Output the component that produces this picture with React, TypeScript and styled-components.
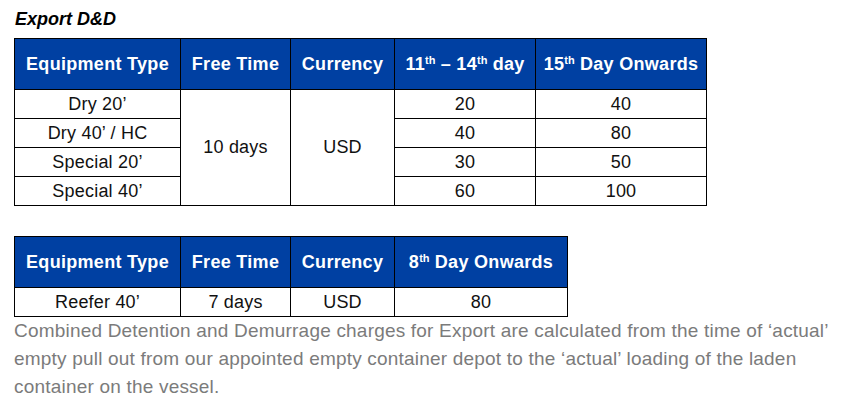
import styled, { createGlobalStyle } from "styled-components"

const GlobalStyle = createGlobalStyle`
    body {
        margin: 0;
        background: #ffffff;
        font-family: "Liberation Sans", Arial, sans-serif;
    }
`

const Page = styled.div`
    box-sizing: border-box;
    width: 843px;
    height: 404px;
    padding: 8px 0 0 14px;
    display: flex;
    flex-direction: column;
    align-items: flex-start;
`

const Title = styled.h3`
    margin: 0 0 7px 1px;
    font-size: 18px;
    line-height: 23px;
    font-weight: 700;
    font-style: italic;
    color: #000;
`

const Table = styled.table<{ w: number; gap?: number }>`
    width: ${props => props.w}px;
    border-collapse: collapse;
    table-layout: fixed;
    margin-bottom: ${props => props.gap ?? 0}px;
`

const HeadCell = styled.th<{ w: number }>`
    box-sizing: border-box;
    width: ${props => props.w}px;
    height: 51px;
    padding: 0;
    background: #0040a2;
    color: #fff;
    font-size: 18px;
    font-weight: 700;
    letter-spacing: 0.3px;
    white-space: nowrap;
    text-align: center;
    border: 1px solid #000;
    sup {
        font-size: 11px;
        vertical-align: 6px;
        line-height: 0;
        letter-spacing: 0;
    }
`

const Cell = styled.td`
    box-sizing: border-box;
    height: 29px;
    padding: 0;
    font-size: 18px;
    letter-spacing: 0.2px;
    color: #111;
    text-align: center;
    vertical-align: middle;
    border: 1px solid #000;
`

const Note = styled.p`
    margin: 0;
    width: 829px;
    font-size: 19px;
    line-height: 28px;
    letter-spacing: 0.2px;
    color: #7b7b7b;
`

const exportRows = [
    { type: "Dry 20’", a: "20", b: "40" },
    { type: "Dry 40’ / HC", a: "40", b: "80" },
    { type: "Special 20’", a: "30", b: "50" },
    { type: "Special 40’", a: "60", b: "100" },
]

export default function App() {
    return (
        <Page>
            <GlobalStyle />
            <Title>Export D&amp;D</Title>
            <Table w={692} gap={30}>
                <thead>
                    <tr>
                        <HeadCell w={166}>Equipment Type</HeadCell>
                        <HeadCell w={110}>Free Time</HeadCell>
                        <HeadCell w={104}>Currency</HeadCell>
                        <HeadCell w={141}>11<sup>th</sup> – 14<sup>th</sup> day</HeadCell>
                        <HeadCell w={171}>15<sup>th</sup> Day Onwards</HeadCell>
                    </tr>
                </thead>
                <tbody>
                    {exportRows.map((row, index) => (
                        <tr key={index}>
                            <Cell>{row.type}</Cell>
                            {index === 0 ? (
                                <>
                                    <Cell rowSpan={4}>10 days</Cell>
                                    <Cell rowSpan={4}>USD</Cell>
                                </>
                            ) : null}
                            <Cell>{row.a}</Cell>
                            <Cell>{row.b}</Cell>
                        </tr>
                    ))}
                </tbody>
            </Table>
            <Table w={553}>
                <thead>
                    <tr>
                        <HeadCell w={166}>Equipment Type</HeadCell>
                        <HeadCell w={110}>Free Time</HeadCell>
                        <HeadCell w={104}>Currency</HeadCell>
                        <HeadCell w={173}>8<sup>th</sup> Day Onwards</HeadCell>
                    </tr>
                </thead>
                <tbody>
                    <tr>
                        <Cell>Reefer 40’</Cell>
                        <Cell>7 days</Cell>
                        <Cell>USD</Cell>
                        <Cell>80</Cell>
                    </tr>
                </tbody>
            </Table>
            <Note>
                Combined Detention and Demurrage charges for Export are calculated from the time of ‘actual’
                empty pull out from our appointed empty container depot to the ‘actual’ loading of the laden
                container on the vessel.
            </Note>
        </Page>
    )
}
